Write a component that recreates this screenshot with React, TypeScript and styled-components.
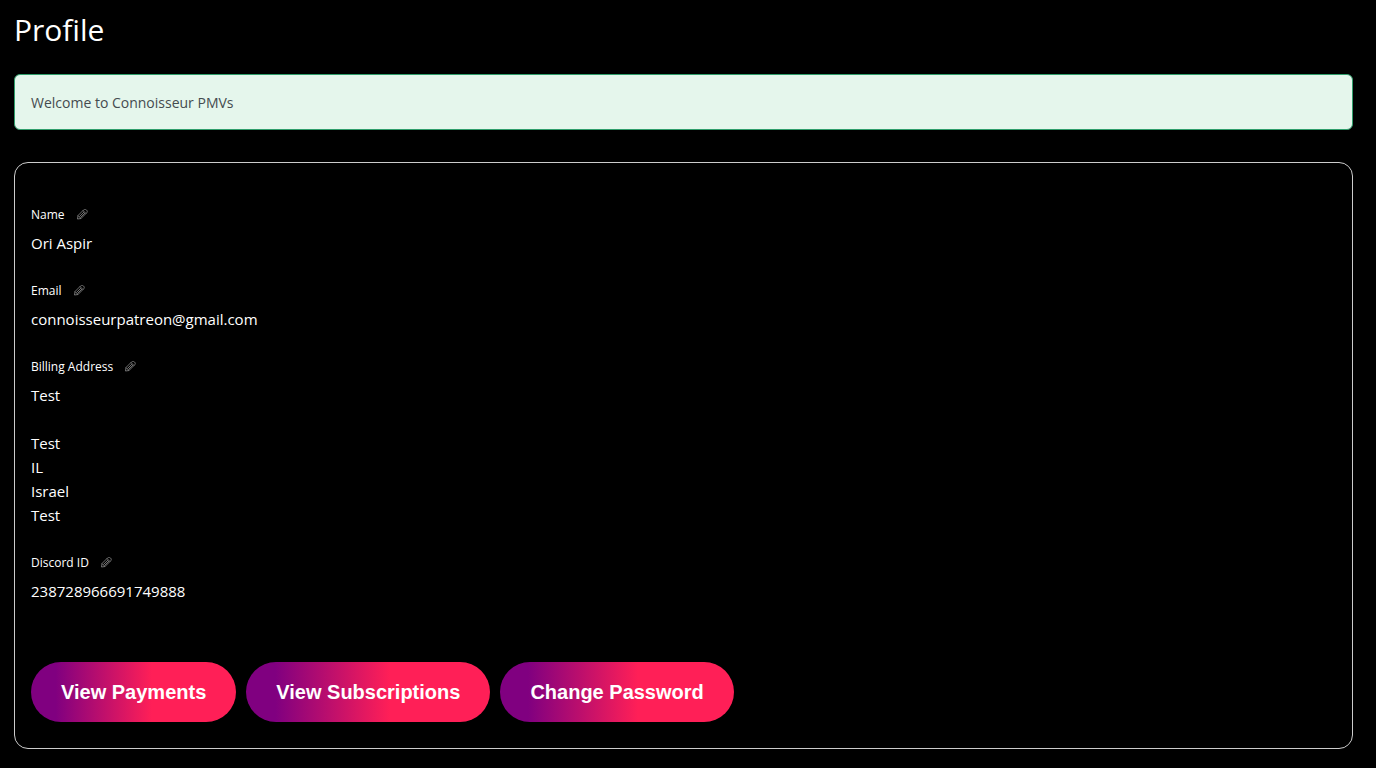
import React from "react";
import styled, { createGlobalStyle } from "styled-components";

const GlobalStyle = createGlobalStyle`
  *, *::before, *::after {
    box-sizing: border-box;
  }
  body {
    margin: 0;
    background: #000;
    color: #fff;
    font-family: "Segoe UI", "Open Sans", "Noto Sans", sans-serif;
  }
`;

const Page = styled.main`
  padding: 8px 23px 19px 14px;
`;

const Title = styled.h1`
  margin: 0 0 22px;
  font-size: 30px;
  line-height: 44px;
  font-weight: 400;
`;

const Notice = styled.p`
  margin: 0 0 32px;
  padding: 16px 16px 14px;
  border: 1px solid #2f9e6b;
  border-radius: 6px;
  background: #e5f6ec;
  color: #444b4f;
  font-size: 14px;
  line-height: 24px;
`;

const Card = styled.section`
  padding: 41px 16px 26px;
  border: 1px solid #ccc;
  border-radius: 14px;
`;

const Fields = styled.dl`
  display: flex;
  flex-direction: column;
  gap: 25px;
  margin: 0;
`;

const Field = styled.div`
  display: flex;
  flex-direction: column;
  gap: 5px;
`;

const Label = styled.dt`
  display: flex;
  align-items: flex-start;
  gap: 12px;
  font-size: 12px;
  line-height: 22px;
`;

const Value = styled.dd`
  margin: 0;
  font-size: 15px;
  line-height: 24px;
  white-space: pre-line;
`;

const EditButton = styled.button`
  display: flex;
  padding: 5px 0;
  border: 0;
  background: none;
  color: #8c8c8c;
  cursor: pointer;
`;

const Actions = styled.div`
  display: flex;
  flex-wrap: wrap;
  gap: 10px;
  margin-top: 59px;
`;

const ActionButton = styled.button`
  padding: 18px 30px;
  border: 0;
  border-radius: 30px;
  background: linear-gradient(90deg, #800080 12%, #ff1f57 59%);
  color: #fff;
  font-family: Arial, "Liberation Sans", sans-serif;
  font-size: 20px;
  line-height: 24px;
  font-weight: 700;
  cursor: pointer;
`;

const PencilIcon = () => (
  <svg width="11" height="11" viewBox="0 0 22 22" fill="none" stroke="currentColor" strokeWidth="1.6" strokeLinejoin="round" aria-hidden="true">
    <path d="M1 20l1-7L13 2c2-2 4-2 6 0s2 4 0 6L8 19z" />
    <path d="M2 13l6 6M12 3l6 6M5 15l9-9M7 17l9-9" />
  </svg>
);

const fields = [
  { label: "Name", value: "Ori Aspir" },
  { label: "Email", value: "connoisseurpatreon@gmail.com" },
  { label: "Billing Address", value: "Test\n\nTest\nIL\nIsrael\nTest" },
  { label: "Discord ID", value: "238728966691749888" },
];

const actions = ["View Payments", "View Subscriptions", "Change Password"];

export default function App() {
  return (
    <>
      <GlobalStyle />
      <Page>
        <Title>Profile</Title>
        <Notice role="status">Welcome to Connoisseur PMVs</Notice>
        <Card>
          <Fields>
            {fields.map(({ label, value }) => (
              <Field key={label}>
                <Label>
                  {label}
                  <EditButton type="button" aria-label={`Edit ${label}`}>
                    <PencilIcon />
                  </EditButton>
                </Label>
                <Value>{value}</Value>
              </Field>
            ))}
          </Fields>
          <Actions>
            {actions.map((action) => (
              <ActionButton key={action} type="button">
                {action}
              </ActionButton>
            ))}
          </Actions>
        </Card>
      </Page>
    </>
  );
}
